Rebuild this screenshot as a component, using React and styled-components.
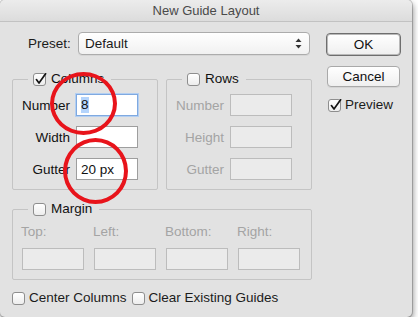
import React from 'react';
import styled, { createGlobalStyle } from 'styled-components';

const GlobalStyle = createGlobalStyle`
  html, body {
    margin: 0;
    background: #ffffff;
  }
  body {
    font-family: "Liberation Sans", Arial, sans-serif;
    font-size: 13.5px;
    color: #1b1b1b;
  }
`;

function CheckBox({ checked }) {
    return (
        <Box>
            {checked ? (
                <CheckMark width="15" height="15" viewBox="0 0 15 15">
                    <path d="M3.4 7.6 L6 11 L12.6 1.8" fill="none" stroke="#151515" strokeWidth="1.7" strokeLinecap="round" strokeLinejoin="round" />
                </CheckMark>
            ) : null}
        </Box>
    );
}

function Field({ label, value, focused, disabled }) {
    return (
        <FieldRow>
            <FieldLabel $disabled={disabled}>{label}</FieldLabel>
            <TextBox $disabled={disabled} $focused={focused}>
                {focused ? <Selected>{value}</Selected> : value}
            </TextBox>
        </FieldRow>
    );
}

export default function App() {
    return (
        <>
            <GlobalStyle />
            <Window>
                <TitleBar>New Guide Layout</TitleBar>
                <Content>
                    <Main>
                        {/* preset */}
                        <PresetRow>
                            <PresetLabel>Preset:</PresetLabel>
                            <Select>
                                Default
                                <svg width="7" height="11" viewBox="0 0 7 11">
                                    <path d="M3.5 0.5 L6.5 4 L0.5 4 Z" fill="#333" />
                                    <path d="M3.5 10.5 L6.5 7 L0.5 7 Z" fill="#333" />
                                </svg>
                            </Select>
                        </PresetRow>

                        {/* columns / rows */}
                        <GroupPair>
                            <Group $w={146}>
                                <Legend>
                                    <CheckBox checked />
                                    Columns
                                </Legend>
                                <FieldStack>
                                    <Field label="Number" value="8" focused />
                                    <Field label="Width" value="" />
                                    <Field label="Gutter" value="20 px" />
                                </FieldStack>
                            </Group>
                            <Group $w={146}>
                                <Legend>
                                    <CheckBox />
                                    Rows
                                </Legend>
                                <FieldStack>
                                    <Field label="Number" value="" disabled />
                                    <Field label="Height" value="" disabled />
                                    <Field label="Gutter" value="" disabled />
                                </FieldStack>
                            </Group>
                        </GroupPair>

                        {/* margin */}
                        <Group $w={300} $gap={12}>
                            <Legend>
                                <CheckBox />
                                Margin
                            </Legend>
                            <MarginGrid>
                                <MarginLabel>Top:</MarginLabel>
                                <MarginLabel>Left:</MarginLabel>
                                <MarginLabel>Bottom:</MarginLabel>
                                <MarginLabel>Right:</MarginLabel>
                                <TextBox $disabled />
                                <TextBox $disabled />
                                <TextBox $disabled />
                                <TextBox $disabled />
                            </MarginGrid>
                        </Group>

                        <BottomRow>
                            <CheckLabel>
                                <CheckBox />
                                Center Columns
                            </CheckLabel>
                            <CheckLabel>
                                <CheckBox />
                                Clear Existing Guides
                            </CheckLabel>
                        </BottomRow>
                    </Main>

                    <Side>
                        <Button $default>OK</Button>
                        <Button>Cancel</Button>
                        <CheckLabel>
                            <CheckBox checked />
                            Preview
                        </CheckLabel>
                    </Side>
                </Content>

                {/* red annotation rings */}
                <Ring $x={50} $y={72} $w={67} $h={63} />
                <Ring $x={63} $y={138} $w={65} $h={66} />
            </Window>
        </>
    );
}

const Window = styled.div`
    position: relative;
    width: 412px;
    height: 317px;
    box-sizing: border-box;
    background: #e2e2e2;
    border-radius: 5px;
    box-shadow: 0 0 0 1px rgba(0, 0, 0, 0.18), 1px 3px 6px rgba(0, 0, 0, 0.45);
    overflow: hidden;
    display: flex;
    flex-direction: column;
`
const TitleBar = styled.div`
    height: 22px;
    box-sizing: border-box;
    line-height: 22px;
    text-align: center;
    font-size: 13px;
    color: #4a4a4a;
    background: linear-gradient(#ececec, #dcdcdc);
    border-bottom: 1px solid #c2c2c2;
`
const Content = styled.div`
    display: grid;
    grid-template-columns: 300px 75px;
    column-gap: 14px;
    padding: 10px 0 0 12px;
`
const Main = styled.div`
    display: flex;
    flex-direction: column;
`
const PresetRow = styled.div`
    display: flex;
    align-items: center;
    gap: 7px;
    padding-left: 16px;
    height: 23px;
`
const PresetLabel = styled.span`
    width: 43px;
`
const Select = styled.div`
    width: 232px;
    height: 23px;
    box-sizing: border-box;
    border: 1px solid #acacac;
    border-radius: 4px;
    background: linear-gradient(#ffffff, #f1f1f1);
    display: flex;
    align-items: center;
    justify-content: space-between;
    padding: 0 7px 0 6px;
    box-shadow: 0 1px 0 rgba(0, 0, 0, 0.05);
`
const GroupPair = styled.div`
    display: flex;
    gap: 8px;
    margin-top: 17px;
`
const Group = styled.fieldset`
    margin: ${p => p.$gap || 0}px 0 0 0;
    padding: 0;
    width: ${p => p.$w}px;
    box-sizing: border-box;
    min-width: 0;
    border: 1px solid #c4c4c4;
    border-radius: 2px;
`
const Legend = styled.legend`
    margin-left: 15px;
    padding: 0 7px 0 5px;
    height: 14px;
    line-height: 14px;
    display: flex;
    align-items: center;
    gap: 5px;
    color: #111;
`
const FieldStack = styled.div`
    display: flex;
    flex-direction: column;
    gap: 10px;
    padding: 8px 0 9px 0;
`
const FieldRow = styled.div`
    display: flex;
    align-items: center;
    gap: 6px;
`
const FieldLabel = styled.span`
    width: 57px;
    text-align: right;
    color: ${p => (p.$disabled ? '#a4a4a4' : '#111')};
`
const TextBox = styled.div`
    width: 62px;
    height: 22px;
    box-sizing: border-box;
    padding-left: 4px;
    display: flex;
    align-items: center;
    color: #111;
    background: ${p => (p.$disabled ? '#ebebeb' : '#ffffff')};
    border: 1px solid ${p => (p.$focused ? '#7fa9e0' : p.$disabled ? '#bcbcbc' : '#9e9e9e')};
    box-shadow: ${p => (p.$focused ? '0 0 0 1px #b3cff2' : 'none')};
`
const Selected = styled.span`
    background: #b4d4fc;
    line-height: 16px;
`
const MarginGrid = styled.div`
    display: grid;
    grid-template-columns: repeat(4, 62px);
    column-gap: 10px;
    row-gap: 8px;
    padding: 8px 0 9px 9px;
`
const MarginLabel = styled.span`
    line-height: 16px;
    color: #a4a4a4;
    margin-left: -1px;
`
const BottomRow = styled.div`
    display: flex;
    gap: 5px;
    margin-top: 11px;
`
const CheckLabel = styled.label`
    display: flex;
    align-items: center;
    gap: 4px;
    height: 14px;
    line-height: 14px;
`
const Box = styled.span`
    position: relative;
    width: 13px;
    height: 13px;
    box-sizing: border-box;
    border: 1px solid #8e8e8e;
    border-radius: 3px;
    background: linear-gradient(#ffffff, #ededed);
    flex: none;
`
const CheckMark = styled.svg`
    position: absolute;
    left: -1px;
    top: -2px;
`
const Side = styled.div`
    display: flex;
    flex-direction: column;
    align-items: stretch;
    padding-top: 1px;
    gap: 10px;

    & > label {
        margin-top: 1px;
        padding-left: 2px;
    }
`
const Button = styled.div`
    height: ${p => (p.$default ? 23 : 21)}px;
    margin: ${p => (p.$default ? '0' : '0 1px')};
    box-sizing: border-box;
    border: 1px solid ${p => (p.$default ? '#6e6e6e' : '#a9a9a9')};
    border-radius: 4px;
    background: linear-gradient(#ffffff, #efefef);
    display: flex;
    align-items: center;
    justify-content: center;
    color: #111;
    box-shadow: ${p => (p.$default ? 'inset 0 0 0 1px #b9b9b9' : '0 1px 0 rgba(0,0,0,0.06)')};
`
const Ring = styled.div`
    position: absolute;
    left: ${p => p.$x}px;
    top: ${p => p.$y}px;
    width: ${p => p.$w}px;
    height: ${p => p.$h}px;
    box-sizing: border-box;
    border: 4.5px solid #e8141b;
    border-radius: 50%;
    pointer-events: none;
`
